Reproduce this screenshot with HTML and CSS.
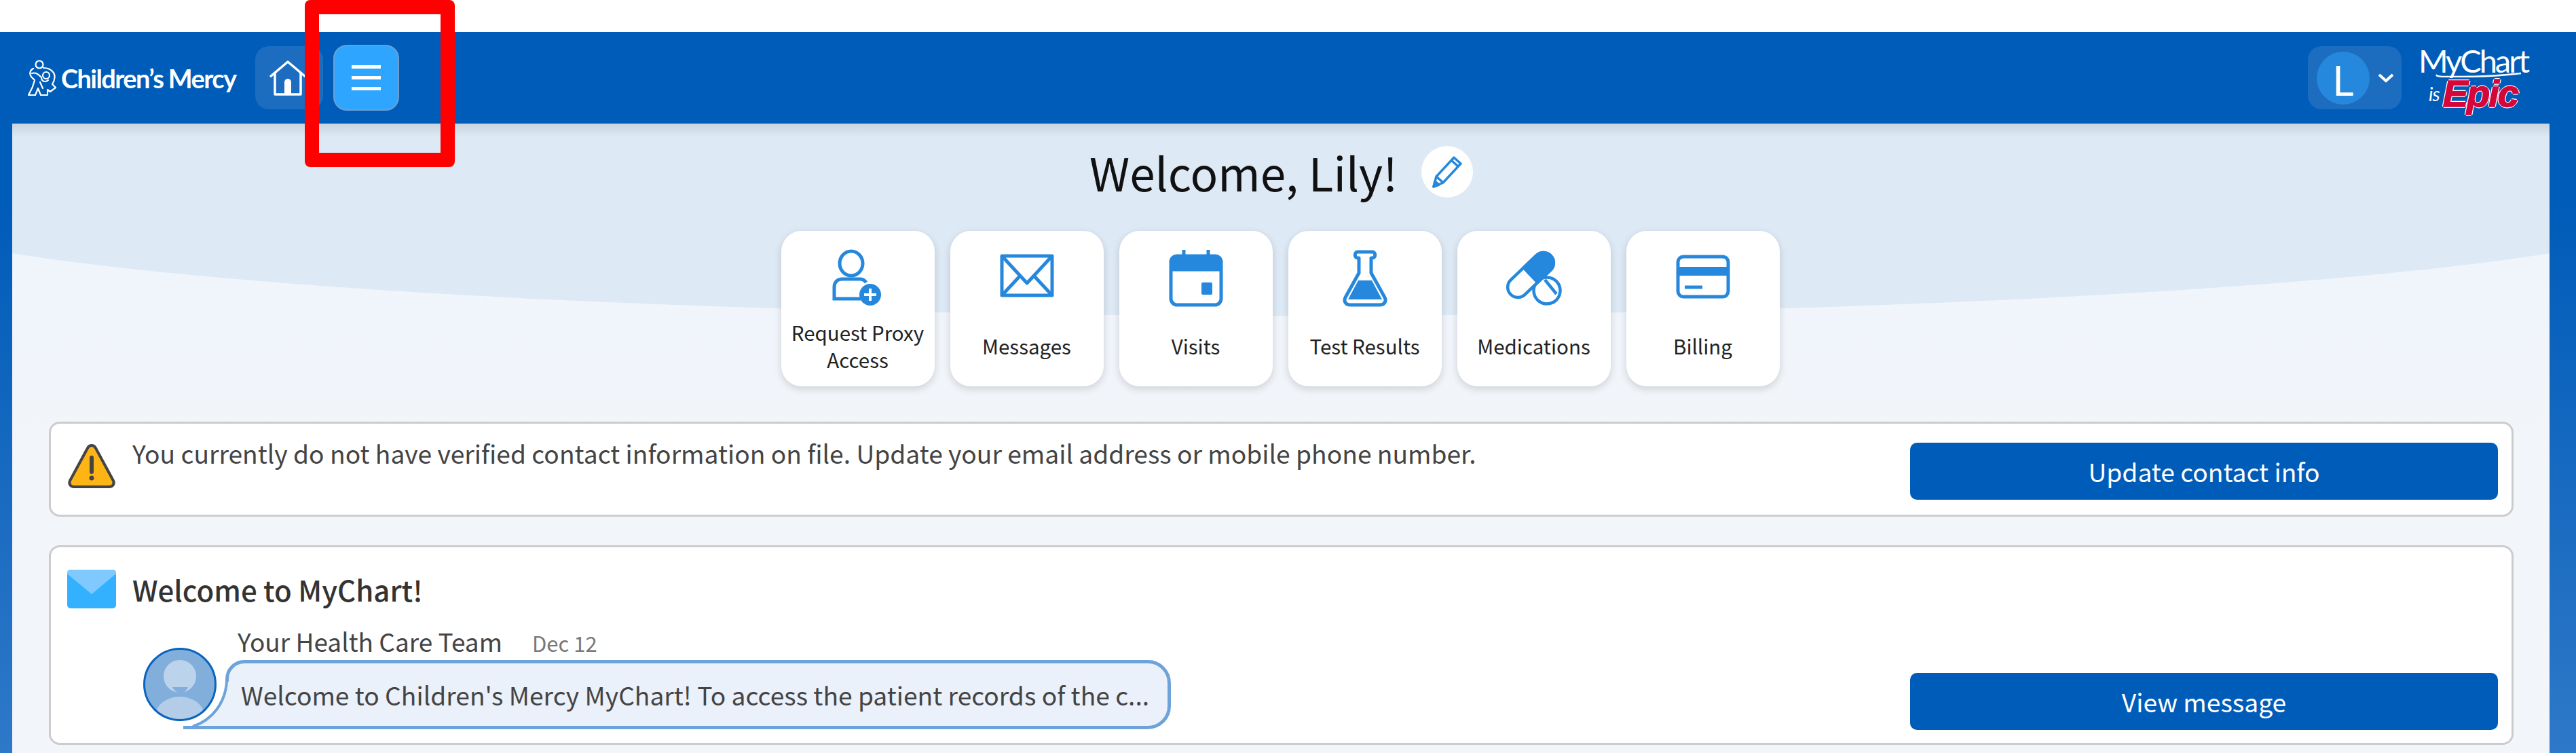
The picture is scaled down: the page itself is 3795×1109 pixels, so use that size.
FILE: index.html
```html
<!DOCTYPE html>
<html lang="en">
<head>
    <meta charset="UTF-8">
    <meta name="viewport" content="width=device-width, initial-scale=1.0">
    <title>MyChart - Welcome</title>
    <link rel="stylesheet" href="styles.css">
</head>
<body>
    <div class="top-gap"></div>
    <header>
        <a href="#" class="logo">
            <svg class="logo-figure" viewBox="0 0 42 54" fill="none" stroke="#fff" stroke-width="2.2" stroke-linejoin="round" stroke-linecap="round">
                <circle cx="17" cy="7" r="5.5"/>
                <path d="M8 13C3 15 2 21 5 25l5 5-3 10-6 12h10l4-10 4 10h10v-8l4 3 8-6-5-5c4-6 5-14 1-18-4-5-10-6-14-6"/>
                <circle cx="27" cy="23" r="5"/>
                <path d="M6 20c6-2 10 2 14 6 0 6 6 8 10 4"/>
                <path d="M18 33l4 9"/>
            </svg>
            <span class="logo-text">Children’s Mercy</span>
        </a>
        <a href="#" class="nav-btn home-btn">
            <svg width="56" height="52" viewBox="0 0 56 52" fill="none" stroke="#fff" stroke-width="3.5" stroke-linejoin="round">
                <path d="M2 24L28 2l26 22"/>
                <path d="M9 19v31h38V19"/>
                <path d="M23 50V32a5 5 0 0 1 10 0v18" fill="#fff" stroke="none"/>
            </svg>
        </a>
        <a href="#" class="nav-btn menu-btn">
            <span></span>
            <span></span>
            <span></span>
        </a>
        <div class="account">
            <span class="avatar-letter">L</span>
            <svg width="24" height="14" viewBox="0 0 24 14" fill="none" stroke="#fff" stroke-width="4"><path d="M2 2l10 9 10-9"/></svg>
        </div>
        <div class="mychart-logo">
            <div class="mychart-word">MyChart</div>
            <svg class="mychart-swoosh" viewBox="0 0 164 8" fill="none" stroke="#fff" stroke-width="2.5"><path d="M27 4c-2 3 6 3 30 3s60-1 94-5"/></svg>
            <div class="epic-row"><span class="is-word">is</span><span class="epic-word">Epic</span></div>
        </div>
    </header>

    <main class="panel">
        <div class="panel-curve"></div>
        <div class="welcome-row">
            <h1>Welcome, Lily!</h1>
            <a href="#" class="edit-btn">
                <svg width="46" height="50" viewBox="0 0 46 50" fill="none" stroke="#2688dc" stroke-width="3.5" stroke-linejoin="round">
                    <path d="M3 47l4-15L33 4l10 9-26 28z"/>
                    <path d="M7 32l10 9M29 8l10 9"/>
                    <path d="M3 47l2-8 6 5z" fill="#2688dc"/>
                </svg>
            </a>
        </div>

        <nav class="tiles">
            <a href="#" class="tile">
                <svg class="tile-icon" viewBox="0 0 80 84" fill="none" stroke="#2688dc" stroke-width="5">
                    <ellipse cx="30" cy="20" rx="17" ry="18"/>
                    <path d="M44 72H5V55c0-8 5-12 12-12h26c4 0 7 2 9 5"/>
                    <circle cx="58" cy="66" r="16" fill="#2688dc" stroke="none"/>
                    <path d="M58 57v18M49 66h18" stroke="#fff" stroke-width="4"/>
                </svg>
                <span class="tile-label">Request Proxy Access</span>
            </a>
            <a href="#" class="tile">
                <svg class="tile-icon" viewBox="0 0 80 84" fill="none" stroke="#2688dc" stroke-width="5" stroke-linejoin="round">
                    <rect x="3" y="9" width="74" height="58"/>
                    <path d="M3 9l37 40L77 9"/>
                    <path d="M3 67l27-29M77 67L50 38"/>
                </svg>
                <span class="tile-label">Messages</span>
            </a>
            <a href="#" class="tile">
                <svg class="tile-icon" viewBox="0 0 80 84" fill="none" stroke="#2688dc">
                    <rect x="3" y="9" width="74" height="72" rx="9" stroke-width="5"/>
                    <path d="M3 30V16a7 7 0 0 1 7-7h60a7 7 0 0 1 7 7v14z" fill="#2688dc" stroke-width="3"/>
                    <path d="M22 0v12M58 0v12" stroke-width="5"/>
                    <rect x="48" y="48" width="16" height="18" rx="2" fill="#2688dc" stroke="none"/>
                </svg>
                <span class="tile-label">Visits</span>
            </a>
            <a href="#" class="tile">
                <svg class="tile-icon" viewBox="0 0 80 84" fill="none" stroke="#2688dc" stroke-width="5" stroke-linejoin="round">
                    <path d="M29 3h22c5 0 5 9 0 9h-2v22l20 36c3 6-1 11-7 11H18c-6 0-10-5-7-11l20-36V12h-2c-5 0-5-9 0-9z"/>
                    <path d="M30 45h20l15 28H15z" fill="#2688dc" stroke="none"/>
                </svg>
                <span class="tile-label">Test Results</span>
            </a>
            <a href="#" class="tile">
                <svg class="tile-icon" viewBox="0 0 80 84" fill="none" stroke="#2688dc" stroke-width="4.5" stroke-linejoin="round">
                    <circle cx="59" cy="60" r="19.5" fill="#fff"/>
                    <path d="M56 44l17 21"/>
                    <g transform="translate(35 37) rotate(-43.5)">
                        <rect x="-41" y="-15" width="82" height="30" rx="15" fill="#fff"/>
                        <path d="M0-15h26a15 15 0 0 1 0 30H0z" fill="#2688dc"/>
                    </g>
                </svg>
                <span class="tile-label">Medications</span>
            </a>
            <a href="#" class="tile">
                <svg class="tile-icon" viewBox="0 0 80 84" fill="none" stroke="#2688dc" stroke-width="5">
                    <rect x="3" y="10" width="74" height="59" rx="8"/>
                    <rect x="3" y="25" width="74" height="13" fill="#2688dc" stroke="none"/>
                    <path d="M13 55h26"/>
                </svg>
                <span class="tile-label">Billing</span>
            </a>
        </nav>

        <section class="card alert-card">
            <svg class="card-icon" viewBox="0 0 72 67">
                <path d="M36 4c3 0 5 2 6 4l26 48c2 5-1 9-6 9H10c-5 0-8-4-6-9L30 8c1-2 3-4 6-4z" fill="#fdb515" stroke="#444" stroke-width="4" stroke-linejoin="round"/>
                <path d="M36 22v21" stroke="#444" stroke-width="6" stroke-linecap="round"/>
                <circle cx="36" cy="52" r="3.5" fill="#444"/>
            </svg>
            <p class="alert-text">You currently do not have verified contact information on file. Update your email address or mobile phone number.</p>
            <a href="#" class="action-btn">Update contact info</a>
        </section>

        <section class="card message-card">
            <div class="message-title">
                <svg class="card-icon" viewBox="0 0 72 57">
                    <rect width="72" height="57" rx="5" fill="#33b1ff"/>
                    <path d="M0 5a5 5 0 0 1 5-5h62a5 5 0 0 1 5 5v1L36 36 0 6z" fill="#80c9ff"/>
                </svg>
                <h2>Welcome to MyChart!</h2>
            </div>
            <div class="message-body">
                <svg class="sender-avatar" viewBox="0 0 108 108">
                    <defs><clipPath id="avatarClip"><circle cx="54" cy="54" r="53"/></clipPath></defs>
                    <circle cx="54" cy="54" r="52.5" fill="#82aedc"/>
                    <g clip-path="url(#avatarClip)">
                        <ellipse cx="54" cy="100" rx="36" ry="28" fill="#b3cce8"/>
                        <circle cx="54" cy="42" r="24" fill="#bcd3ec"/>
                        <path d="M43 58h23c-3 6-7 9-11 9s-9-3-12-9z" fill="#82aedc"/>
                    </g>
                    <circle cx="54" cy="54" r="52.5" fill="none" stroke="#0a63bd" stroke-width="3"/>
                </svg>
                <div class="message-main">
                    <div class="message-meta">
                        <span class="sender">Your Health Care Team</span>
                        <span class="message-date">Dec 12</span>
                    </div>
                    <div class="bubble">
                        <svg class="bubble-tail" viewBox="0 0 72 70" fill="none">
                            <path d="M64 0C62 30 44 56 14 66H72V0z" fill="#ebf1fa"/>
                            <path d="M64 0C62 30 44 56 14 66" stroke="#6ea3d9" stroke-width="4"/>
                            <path d="M0 67.5h72" stroke="#6ea3d9" stroke-width="5"/>
                        </svg>
                        <span class="bubble-text">Welcome to Children's Mercy MyChart! To access the patient records of the c...</span>
                    </div>
                </div>
                <a href="#" class="action-btn">View message</a>
            </div>
        </section>
    </main>

    <!-- annotation drawn over the screenshot -->
    <div class="red-box"></div>
</body>
</html>
```

FILE: styles.css
```css
* {
    box-sizing: border-box;
}

html, body {
    height: 1109px;
    overflow: hidden;
}

body {
    margin: 0;
    padding-top: 47px;
    font-family: "Noto Sans CJK SC", "Source Sans Pro", "Open Sans", sans-serif;
    color: #444;
    background: linear-gradient(to bottom, #005cb9 0, #005cb9 300px, #2e78c8 1109px);
    position: relative;
}

a {
    text-decoration: none;
}

.top-gap {
    position: absolute;
    top: 0;
    left: 0;
    width: 100%;
    height: 47px;
    background-color: #fff;
}

header {
    height: 135px;
    background-color: #005cb9;
    display: flex;
    align-items: center;
    padding-left: 41px;
    position: relative;
}

.logo {
    display: flex;
    align-items: center;
    gap: 7px;
    color: #fff;
    width: 335px;
}

.logo-figure {
    width: 42px;
    height: 54px;
    flex-shrink: 0;
}

.logo-text {
    font-family: Lato, sans-serif;
    font-size: 38px;
    font-weight: 700;
    letter-spacing: -1.6px;
    white-space: nowrap;
}

.nav-btn {
    display: flex;
    border-radius: 20px;
}

.home-btn {
    width: 100px;
    height: 93px;
    background-color: #1c6cc0;
    align-items: center;
    padding-left: 20px;
}

.menu-btn {
    width: 97px;
    height: 97px;
    margin-left: 15px;
    background-color: #2ea6ff;
    border: 2px solid #6d9fd0;
    flex-direction: column;
    justify-content: center;
    align-items: center;
    gap: 11px;
}

.menu-btn span {
    width: 43px;
    height: 5px;
    background-color: #fff;
}

.account {
    width: 138px;
    height: 93px;
    margin-left: auto;
    padding-left: 13px;
    background-color: #1c6cc0;
    border-radius: 20px;
    display: flex;
    align-items: center;
    gap: 12px;
}

.avatar-letter {
    width: 78px;
    height: 78px;
    border-radius: 50%;
    background-color: #2688dc;
    color: #fff;
    font-size: 60px;
    line-height: 78px;
    text-align: center;
}

.mychart-logo {
    width: 164px;
    margin: 0 68px 0 25px;
    color: #fff;
    font-family: Lato, sans-serif;
    position: relative;
}

.mychart-word {
    font-size: 47px;
    line-height: 42px;
    letter-spacing: -3px;
    white-space: nowrap;
}

.mychart-swoosh {
    display: block;
    width: 164px;
    height: 8px;
    margin-top: -4px;
}

.epic-row {
    display: flex;
    align-items: center;
    padding-left: 15px;
    gap: 5px;
    height: 48px;
}

.is-word {
    font-size: 28px;
    font-style: italic;
    letter-spacing: -1px;
}

.epic-word {
    font-family: "Liberation Sans", sans-serif;
    font-size: 56px;
    line-height: 46px;
    font-weight: 700;
    font-style: italic;
    letter-spacing: -2px;
    color: #d4063a;
    -webkit-text-stroke: 1.5px #d4063a;
    text-shadow: 2px 0 0 #fff, -2px 0 0 #fff, 0 2px 0 #fff, 0 -2px 0 #fff;
}

.panel {
    height: 927px;
    margin: 0 39px 0 18px;
    padding: 33px 53px 0 54px;
    background: linear-gradient(to bottom, #f0f5fc 200px, #f2f5f9 500px);
    position: relative;
    overflow: hidden;
}

/* curved darker band behind the welcome heading */
.panel-curve {
    position: absolute;
    top: 0;
    left: -231px;
    width: 4200px;
    height: 283px;
    background: linear-gradient(to bottom, #c9d4e1 0, #dde9f5 20px);
    border-radius: 0 0 50% 50% / 0 0 169px 169px;
}

.welcome-row {
    display: flex;
    justify-content: center;
    align-items: center;
    gap: 35px;
    height: 76px;
    position: relative;
}

h1 {
    margin: 0;
    font-size: 67.4px;
    font-weight: 400;
    line-height: 76px;
    color: #111;
}

.edit-btn {
    width: 76px;
    height: 76px;
    border-radius: 50%;
    background-color: #fff;
    display: flex;
    align-items: center;
    justify-content: center;
}

.tiles {
    display: flex;
    justify-content: center;
    gap: 23px;
    margin: 49px 0 0 -3px;
    position: relative;
}

.tile {
    width: 226px;
    height: 229px;
    background-color: #fff;
    border-radius: 30px;
    box-shadow: 0 4px 12px rgba(0, 0, 0, 0.15);
    display: flex;
    flex-direction: column;
    align-items: center;
    padding-top: 28px;
    color: #222;
}

.tile-icon {
    width: 80px;
    height: 84px;
    flex-shrink: 0;
    overflow: visible;
}

.tile-label {
    height: 105px;
    display: flex;
    align-items: center;
    text-align: center;
    font-size: 29.5px;
    line-height: 40px;
    padding: 8px 6px 0;
}

.card {
    background-color: #fff;
    border: 3px solid #ccc;
    border-radius: 16px;
    position: relative;
}

.alert-card {
    height: 140px;
    margin-top: 52px;
    padding: 28px 20px 0 24px;
    display: flex;
    align-items: flex-start;
}

.card-icon {
    width: 72px;
    flex-shrink: 0;
}

.alert-text {
    margin: -9px 0 0 24px;
    font-size: 37.2px;
    line-height: 48px;
    flex: 1;
}

.action-btn {
    width: 866px;
    height: 84px;
    background-color: #005cb9;
    color: #fff;
    border-radius: 10px;
    font-size: 37.2px;
    line-height: 84px;
    text-align: center;
    flex-shrink: 0;
}

.message-card {
    height: 294px;
    margin-top: 42px;
    padding: 33px 20px 0 24px;
}

.message-title {
    display: flex;
    align-items: center;
    gap: 24px;
}

h2 {
    margin: 0;
    font-size: 42px;
    font-weight: 500;
    line-height: 57px;
    color: #333;
}

.message-body {
    display: flex;
    align-items: flex-end;
    margin: 28px 0 0 112px;
}

.sender-avatar {
    width: 108px;
    height: 108px;
    margin-bottom: 13px;
    flex-shrink: 0;
}

.message-main {
    width: 1393px;
    margin-right: auto;
    margin-left: 13px;
}

.message-meta {
    display: flex;
    align-items: baseline;
    gap: 44px;
    margin-left: 18px;
    height: 48px;
}

.sender {
    font-size: 37px;
    line-height: 36px;
}

.message-date {
    font-size: 31px;
    color: #777;
}

.bubble {
    height: 102px;
    background-color: #ebf1fa;
    border: 5px solid #6ea3d9;
    border-radius: 28px 34px 34px 0;
    padding: 0 18px;
    display: flex;
    align-items: center;
    position: relative;
    margin-bottom: 1px;
}

.bubble-tail {
    position: absolute;
    left: -67px;
    bottom: -5px;
    width: 72px;
    height: 70px;
}

.bubble-text {
    font-size: 37.2px;
    line-height: 48px;
    white-space: nowrap;
    position: relative;
}

.red-box {
    position: absolute;
    top: 0;
    left: 449px;
    width: 221px;
    height: 246px;
    border: 21px solid #f00;
    border-radius: 8px;
}
```
